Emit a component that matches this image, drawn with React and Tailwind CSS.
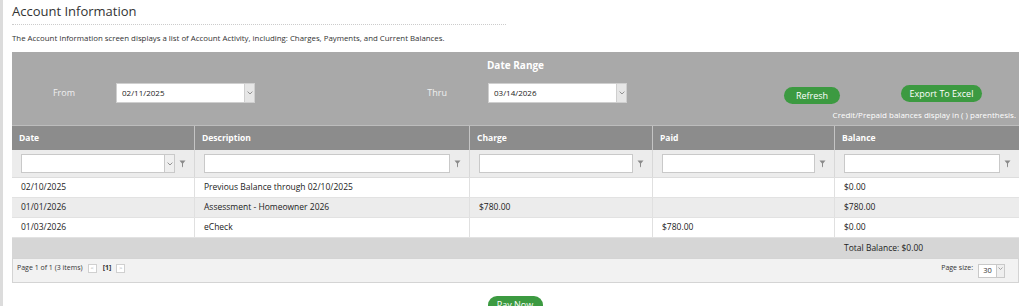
import React from "react";

const font = { fontFamily: '"Open Sans", "Liberation Sans", sans-serif' };

function Filter() {
  return (
    <svg width="7" height="8" viewBox="0 0 7 8" className="shrink-0">
      <path d="M0.5 0.5 H6.5 L4 3.5 V6.5 L3 7.5 V3.5 Z" fill="#8a8a8a" />
    </svg>
  );
}

function Chevron({ size = 6 }) {
  return (
    <svg width={size} height={size * 0.6} viewBox="0 0 10 6">
      <path d="M1 1 L5 5 L9 1" stroke="#888" strokeWidth="1.5" fill="none" />
    </svg>
  );
}

function DateInput({ value }) {
  return (
    <div className="flex h-[20px] w-[139px] bg-white border border-[#cfcfcf]">
      <div className="flex-1 flex items-center pl-[5px] text-[8px] text-[#222]">{value}</div>
      <div className="w-[10px] bg-[#e6e6e6] border-l border-[#cfcfcf] flex items-center justify-center">
        <Chevron />
      </div>
    </div>
  );
}

function FilterCell({ combo, last }) {
  return (
    <div className={`flex items-center gap-[4px] pl-[9px] pr-[8px] ${last ? "" : "border-r border-[#d8d8d8]"}`}>
      <div className="flex-1 flex h-[19px] bg-white border border-[#c9c9c9]">
        <div className="flex-1" />
        {combo && (
          <div className="w-[10px] bg-[#efefef] border-l border-[#c9c9c9] flex items-center justify-center">
            <Chevron />
          </div>
        )}
      </div>
      <Filter />
    </div>
  );
}

const cols = "grid grid-cols-[183px_275px_183px_182px_1fr]";

function Row({ cells, alt }) {
  return (
    <div className={`${cols} h-[20px] ${alt ? "bg-[#ececec]" : "bg-white"} border-b border-[#e2e2e2] text-[8.5px] text-[#222]`}>
      {cells.map((c, i) => (
        <div key={i} className={`flex items-center pl-[9px] ${i < 4 ? "border-r border-[#e0e0e0]" : ""}`}>{c}</div>
      ))}
    </div>
  );
}

export default function App() {
  return (
    <div style={font} className="w-[1024px] h-[306px] overflow-hidden bg-white flex">
      <div className="w-[3px] bg-[#dcdcdc] shrink-0" />
      <div className="flex-1 pl-[9px] pr-[5px]">
        <div className="w-[494px] border-b border-dotted border-[#cccccc] pt-[2px] pb-[4px]">
          <h1 className="text-[13px] text-[#333] leading-[18px]">Account Information</h1>
        </div>
        <p className="text-[7.85px] text-[#333] mt-[8px] leading-[10px]">
          The Account Information screen displays a list of Account Activity, including: Charges, Payments, and Current Balances.
        </p>
        <div className="mt-[9px] w-[1007px]">
          <div className="bg-[#a9a9a9] h-[73px] relative">
            <div className="text-center text-white font-bold text-[10px] pt-[6px] leading-[14px]">Date Range</div>
            <div className="flex items-center mt-[10px]">
              <div className="w-[104px] text-right pr-[41px] text-[9px] text-[#f0f0f0]">From</div>
              <DateInput value="02/11/2025" />
              <div className="w-[233px] text-right pr-[41px] text-[9px] text-[#f0f0f0]">Thru</div>
              <DateInput value="03/14/2026" />
              <button className="ml-[157px] mt-[5px] h-[17px] w-[56px] rounded-full bg-[#3c9a41] text-white text-[9px]">Refresh</button>
              <button className="ml-[61px] mt-[1px] h-[17px] w-[81px] rounded-full bg-[#3c9a41] text-white text-[9px]">Export To Excel</button>
            </div>
            <div className="absolute right-[3px] bottom-[4px] text-[8px] text-white">Credit/Prepaid balances display in ( ) parenthesis.</div>
          </div>
          <div className={`${cols} h-[25px] bg-[#8c8c8c] border-t border-[#bdbdbd] text-white font-bold text-[8.5px]`}>
            {["Date", "Description", "Charge", "Paid", "Balance"].map((h, i) => (
              <div key={h} className={`flex items-center pl-[7px] ${i < 4 ? "border-r border-[#c4c4c4]" : ""}`}>{h}</div>
            ))}
          </div>
          <div className={`${cols} h-[28px] bg-[#ececec] border-b border-[#dddddd]`}>
            <FilterCell combo />
            <FilterCell />
            <FilterCell />
            <FilterCell />
            <FilterCell last />
          </div>
          <Row cells={["02/10/2025", "Previous Balance through 02/10/2025", "", "", "$0.00"]} />
          <Row alt cells={["01/01/2026", "Assessment - Homeowner 2026", "$780.00", "", "$780.00"]} />
          <Row cells={["01/03/2026", "eCheck", "", "$780.00", "$0.00"]} />
          <div className={`${cols} h-[20px] bg-[#d6d6d6] text-[8.5px] text-[#222]`}>
            <div /><div /><div /><div />
            <div className="flex items-center pl-[9px]">Total Balance: $0.00</div>
          </div>
          <div className="h-[25px] bg-[#f2f2f2] border border-[#d4d4d4] flex items-center pb-[4px] pl-[4px] pr-[13px] text-[7px] text-[#333]">
            <span>Page 1 of 1 (3 items)</span>
            <span className="ml-[5px] w-[9px] h-[9px] border border-[#d0d0d0] bg-white flex items-center justify-center text-[6px] text-[#aaa]">&lt;</span>
            <span className="ml-[6px] font-bold text-[7px]">[1]</span>
            <span className="ml-[5px] w-[9px] h-[9px] border border-[#d0d0d0] bg-white flex items-center justify-center text-[6px] text-[#aaa]">&gt;</span>
            <span className="ml-auto">Page size:</span>
            <div className="ml-[5px] mt-[5px] flex h-[14px] w-[27px] bg-white border border-[#c9c9c9]">
              <div className="flex-1 flex items-end justify-center pb-[1px] text-[7.5px]">30</div>
              <div className="w-[8px] bg-[#efefef] border-l border-[#c9c9c9] flex items-start pt-[2px] justify-center">
                <Chevron size={5} />
              </div>
            </div>
          </div>
          <div className="flex justify-center pt-[13px] pr-[1px]">
            <button className="h-[18px] w-[55px] rounded-full bg-[#3c9a41] text-white text-[9px] leading-[18px]">Pay Now</button>
          </div>
        </div>
      </div>
    </div>
  );
}
